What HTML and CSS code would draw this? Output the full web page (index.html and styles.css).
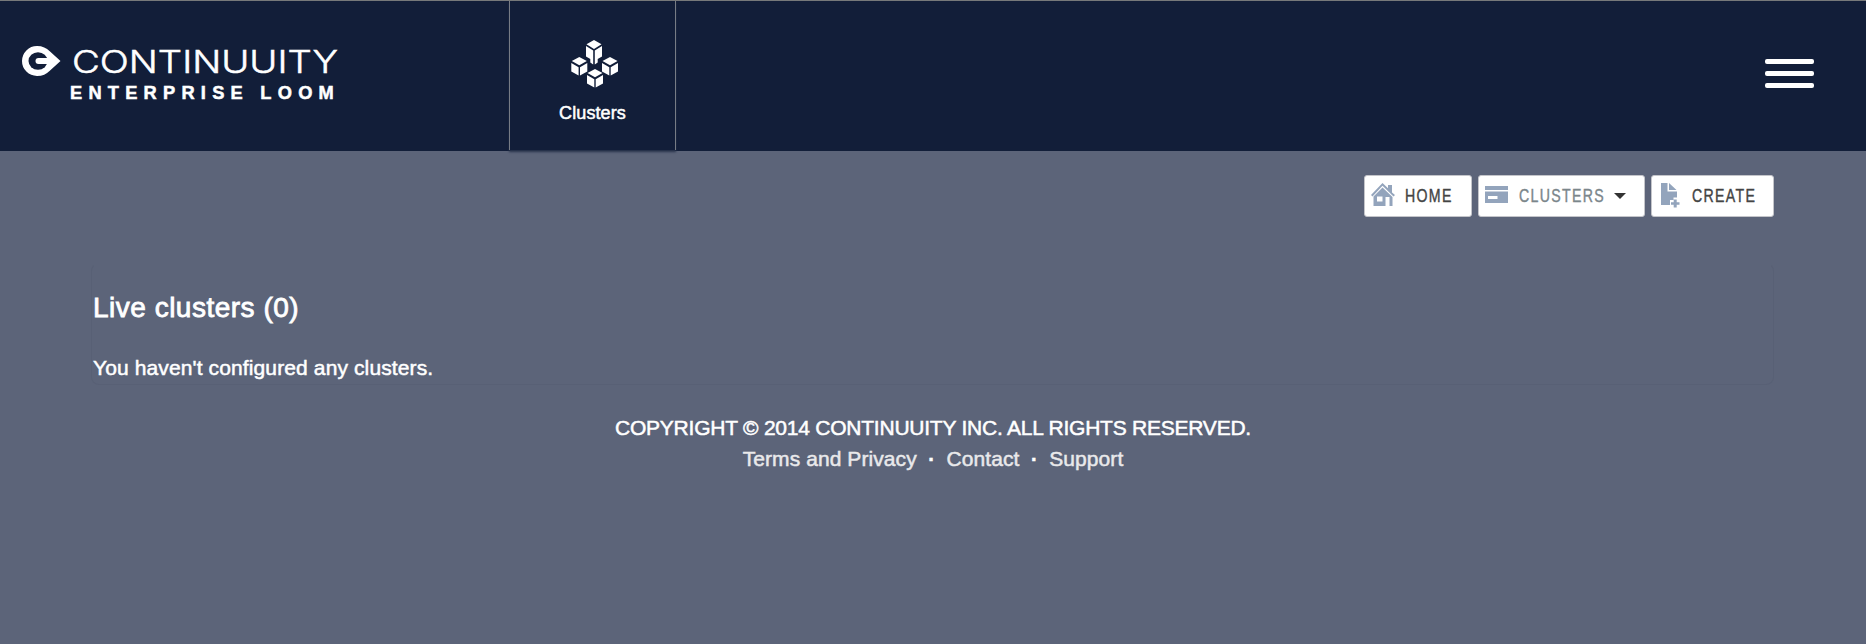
FILE: index.html
```html
<!DOCTYPE html>
<html lang="en">
<head>
<meta charset="utf-8">
<title>Continuuity Enterprise Loom</title>
<link rel="stylesheet" href="styles.css">
</head>
<body>
<header class="header">
  <a class="brand">
    <svg class="brand-logo" width="330" height="70" viewBox="0 0 330 70">
      <path fill="#fff" d="M15 6A15 15 0 1 0 15 36C20.500 36 24.500 34 27.500 31L38.500 21L27.500 11C24.500 8 20.500 6 15 6Z"/>
      <ellipse cx="16" cy="21" rx="9.500" ry="8.700" fill="#121e39"/>
      <path d="M16.500 21H28" stroke="#fff" stroke-width="6" stroke-linecap="round"/>
      <text class="logo-name" x="50" y="32.700" textLength="266" lengthAdjust="spacingAndGlyphs">CONTINUUITY</text>
      <text class="logo-sub" x="48" y="58.700" textLength="270" lengthAdjust="spacingAndGlyphs">ENTERPRISE LOOM</text>
    </svg>
  </a>
  <nav class="nav">
    <a class="nav-item">
      <svg class="nav-icon" width="48" height="50" viewBox="0 0 48 50" fill="#fff">
        <path d="M24 0L31.500 4.300L24 9L16.500 4.300ZM16 6L23.200 10.500V24.500L20.300 22.500V19L16 16.500ZM32 6L24.800 10.500V24.500L27.700 22.500V19L32 16.500Z"/>
        <path d="M9.300 17L16.800 21L9.300 25.300L1.800 21ZM1.300 23L8.600 27.200V35.500L1.300 31.500ZM17.300 23L10 27.200V35.500L17.300 31.500Z"/>
        <path d="M40 17L47.500 21L40 25.300L32.500 21ZM32 23L39.300 27.200V35.500L32 31.500ZM48 23L40.700 27.200V35.500L48 31.500Z"/>
        <path d="M25 29L32.500 33L25 37.300L17.500 33ZM17 35L24.300 39.200V47.500L17 43.500ZM33 35L25.700 39.200V47.500L33 43.500Z"/>
      </svg>
      <span class="nav-label">Clusters</span>
    </a>
  </nav>
  <div class="menu"><i></i><i></i><i></i></div>
</header>
<main class="container">
  <div class="toolbar">
    <a class="btn btn-home">
      <svg width="24" height="25" viewBox="0 0 24 25"><path fill="#93a4bc" fill-rule="evenodd" d="M0 13L11.500 1L17 6.300V3H21V10.500L24 13L22.500 14.500L11.500 3.800L1.500 14.500ZM11.500 5.500L21.500 15V24H18.500V15H14.500V24H2.500V14.500ZM6 14.500V19.500H11.500V14.500Z"/></svg>
      <span>HOME</span>
    </a>
    <a class="btn btn-clusters">
      <svg width="24" height="25" viewBox="0 0 24 25"><path fill="#93a4bc" fill-rule="evenodd" d="M0 4H23V8H0ZM0 9.500H23V21H0ZM3 14V17H12.500V14Z"/></svg>
      <span>CLUSTERS</span><i class="caret"></i>
    </a>
    <a class="btn btn-create">
      <svg width="24" height="25" viewBox="0 0 24 25"><path fill="#93a4bc" d="M3 1H9.500V9.500H19V15.500H15.500V18H12V23H3ZM11 1L18.500 8H11ZM15.700 17.500H18.700V20.300H21.500V22.700H18.700V25.500H15.700V22.700H13V20.300H15.700Z"/></svg>
      <span>CREATE</span>
    </a>
  </div>
  <section class="content">
    <h1>Live clusters (0)</h1>
    <p>You haven't configured any clusters.</p>
  </section>
</main>
<footer class="footer">
  <div class="copyright">COPYRIGHT © 2014 CONTINUUITY INC. ALL RIGHTS RESERVED.</div>
  <div class="links"><a>Terms and Privacy</a><b>·</b><a>Contact</a><b>·</b><a>Support</a></div>
</footer>
</body>
</html>
```
FILE: styles.css
```css
* { box-sizing: border-box; }
body {
  margin: 0;
  min-height: 644px;
  background: #5c6479;
  color: #fff;
  font-family: "Liberation Sans", Arial, sans-serif;
}
.header {
  display: flex;
  height: 151px;
  background: #121e39;
  border-top: 1px solid #77797a;
}
.brand { width: 509px; padding: 39px 0 0 22px; }
.brand-logo { display: block; overflow: visible; }
.logo-name { fill: #fff; stroke: #fff; stroke-width: .5px; font: 300 31px Inter, sans-serif; }
.logo-sub { fill: #fff; stroke: #fff; stroke-width: .5px; font: bold 17.500px "Liberation Sans", sans-serif; letter-spacing: 6px; }
.nav-item {
  display: flex;
  flex-direction: column;
  align-items: center;
  width: 167px;
  height: 149px;
  padding-top: 39px;
  border: solid #777c85;
  border-width: 0 1px;
  box-shadow: 0 2px 2px #28334c;
}
.nav-icon { display: block; margin-left: 3px; }
.nav-label { margin-top: 12px; font-size: 18px; line-height: 22px; letter-spacing: .1px; -webkit-text-stroke: .5px #fff; }
.menu {
  display: flex;
  flex-direction: column;
  gap: 7px;
  margin: 58px 52px 0 auto;
  width: 49px;
}
.menu i { height: 5px; border-radius: 2px; background: #fff; }
.container { padding: 0 92px; }
.toolbar { display: flex; justify-content: flex-end; gap: 6px; padding-top: 24px; }
.btn {
  display: flex;
  align-items: center;
  height: 42px;
  background: #fff;
  border: 1px solid #c4c5ca;
  border-radius: 3px;
  color: #444;
  font-size: 18.500px;
  letter-spacing: 1.700px;
}
.btn svg { flex: none; margin: -4px 10px 0 6px; overflow: visible; }
/* condensed lettering */
.btn span { transform: scaleX(.765); transform-origin: 0 50%; -webkit-text-stroke: .4px currentColor; }
.btn-home { width: 108px; }
.btn-clusters { width: 167px; color: #7b868b; }
.btn-clusters span { margin-right: -26px; }
.btn-create { width: 123px; }
.caret { margin-left: 9px; border: 6px solid transparent; border-top-color: #333; border-bottom: 0; }
.content {
  height: 122px;
  margin: 46px 0 0 -1px;
  border: 1px solid #586075;
  border-top-color: transparent;
  border-radius: 8px;
}
h1 { margin: 0; padding: 27px 0 0 1px; font-size: 28px; font-weight: 400; line-height: 34px; letter-spacing: .5px; -webkit-text-stroke: .8px #fff; }
p { margin: 30px 0 0 1px; font-size: 21px; line-height: 26px; letter-spacing: .12px; -webkit-text-stroke: .5px #fff; }
.footer { padding-top: 28px; text-align: center; font-size: 21px; line-height: 30px; -webkit-text-stroke: .5px currentColor; }
.copyright { letter-spacing: -.23px; }
.links { padding-top: 1px; color: #e9e9eb; letter-spacing: .08px; }
.links b { margin: 0 11.500px; color: #fff; font-size: 20px; }
```
